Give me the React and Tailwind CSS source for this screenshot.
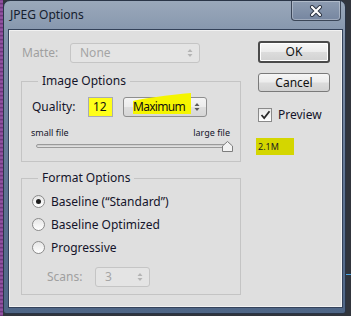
import React from 'react';

const font = { fontFamily: '"Noto Sans", "Open Sans", sans-serif' };

function Arrows({ disabled }) {
  const c = disabled ? '#b4b4b4' : '#5c5c5c';
  return (
    <svg width="6" height="10" viewBox="0 0 6 10" className="shrink-0">
      <path d="M0.5 4 L3 1 L5.5 4 Z" fill={c} />
      <path d="M0.5 6 L3 9 L5.5 6 Z" fill={c} />
    </svg>
  );
}

function Select({ value, disabled, className, textClass = '', children }) {
  return (
    <div
      className={
        'relative flex items-center justify-between rounded-[3px] border pl-[9px] pr-[6px] ' +
        (disabled
          ? 'border-[#c5c5c5] bg-[#e4e4e4] text-[#a5a5a5] '
          : 'border-[#8e8e8e] bg-[linear-gradient(to_bottom,#f4f4f4_0%,#ececec_48%,#dedede_52%,#d6d6d6_100%)] text-[#111] ') +
        className
      }
    >
      {children}
      <span className={'relative z-10 leading-none ' + textClass}>{value}</span>
      <Arrows disabled={disabled} />
    </div>
  );
}

function Radio({ checked, label }) {
  return (
    <div className="flex h-[23px] items-center">
      <div className="flex h-[13px] w-[13px] items-center justify-center rounded-full border border-[#8a8a8a] bg-[linear-gradient(to_bottom,#e6e6e6,#ffffff)]">
        {checked && <div className="h-[5px] w-[5px] rounded-full bg-[#1e1e1e]" />}
      </div>
      <span className="ml-[6px] text-[12px] text-[#14142a]">{label}</span>
    </div>
  );
}

function Group({ title, className, children }) {
  return (
    <fieldset className={'w-[220px] border border-[#c4c4c4] ' + className}>
      <legend className="ml-[16px] px-[4px] text-[12px] leading-[16px] text-[#14142a]">{title}</legend>
      {children}
    </fieldset>
  );
}

export default function App() {
  return (
    <div className="flex h-[316px] w-[351px] overflow-hidden bg-[#31353d]" style={font}>
      <div className="h-full w-[3px] bg-[repeating-linear-gradient(to_bottom,#7b3c8c_0px,#9a5aa8_2px,#5e2a6e_4px)]" />
      <div className="flex h-[314px] w-[343px] flex-col rounded-t-[7px] rounded-b-[3px] border border-[#2a3547] bg-[linear-gradient(to_bottom,#9aa8ba_0%,#8293ab_12%,#5f7493_60%,#4f6686_100%)]">
        <div className="flex h-[29px] items-start justify-between">
          <span className="pl-[6px] pt-[6px] text-[12px] leading-[16px] text-[#15202e]">JPEG Options</span>
          <div className="mr-[4px] flex h-[20px] w-[50px] items-center justify-center rounded-b-[4px] border border-t-0 border-[#3b4658] bg-[linear-gradient(to_bottom,#8d9cb1,#7686a0)] shadow-[inset_0_0_0_1px_rgba(255,255,255,0.3)]">
            <svg width="14" height="12" viewBox="0 0 14 12">
              <path d="M3 2 L11 10 M11 2 L3 10" stroke="#2c3442" strokeWidth="4" strokeLinecap="round" />
              <path d="M3 2 L11 10 M11 2 L3 10" stroke="#ffffff" strokeWidth="2.2" strokeLinecap="round" />
            </svg>
          </div>
        </div>
        <div className="ml-[5px] flex h-[277px] w-[333px] border border-[#f2f2f2] bg-[#dfdfdf] shadow-[0_0_0_1px_#34425a]">
          <div className="flex flex-col pl-[11px] pt-[12px]">
            <div className="flex h-[20px] items-center">
              <span className="ml-[1px] w-[48px] text-[12px] text-[#9f9f9f]">Matte:</span>
              <Select value="None" disabled className="h-[20px] w-[130px] text-[12px]" />
            </div>

            <Group title="Image Options" className="mt-[10px] pb-[8px]">
              <div className="mt-[8px] flex h-[20px] items-center pl-[10px]">
                <span className="w-[56px] text-[12px] text-[#14142a]">Quality:</span>
                <div className="flex h-[20px] w-[25px] items-center border border-[#a9abb2] bg-[#ffff1a] pl-[4px] text-[12px] text-[#111]">
                  12
                </div>
                <Select value="Maximum" textClass="tracking-[-0.7px]" className="ml-[10px] h-[20px] w-[84px] text-[12px]">
                  <svg width="70" height="26" viewBox="0 0 70 26" className="pointer-events-none absolute left-[8px] top-[-6px]">
                    <path d="M1 9 C 6 8, 14 6, 24 5 C 36 3, 48 2, 59 1 L 59 22 L 1 22 Z" fill="#f5f500" />
                  </svg>
                </Select>
              </div>
              <div className="mt-[10px] flex h-[12px] items-center justify-between pl-[9px] pr-[10px] text-[9px] leading-[12px] text-[#14142a]">
                <span>small file</span>
                <span>large file</span>
              </div>
              <div className="h-[14px] pl-[14px] pt-[5px]">
                <div className="relative h-[4px] w-[192px] rounded-[2px] border border-[#9a9a9a] bg-[linear-gradient(to_bottom,#c8c8c8,#e8e8e8)]">
                  <svg width="11" height="11" viewBox="0 0 11 11" className="absolute left-[185px] top-[-4px]">
                    <path d="M0.5 10.5 V5 L5.5 0.5 L10.5 5 V10.5 Z" fill="#f2f2f2" stroke="#7d7d7d" />
                  </svg>
                </div>
              </div>
            </Group>

            <Group title="Format Options" className="mt-[8px] pb-[7px]">
              <div className="mt-[4px] pl-[10px]">
                <Radio checked label="Baseline (“Standard”)" />
                <Radio label="Baseline Optimized" />
                <Radio label="Progressive" />
              </div>
              <div className="mt-[8px] flex h-[20px] items-center pl-[25px]">
                <span className="w-[48px] text-[12px] text-[#a0a0a0]">Scans:</span>
                <Select value="3" disabled className="h-[20px] w-[55px] text-[12px]" />
              </div>
            </Group>
          </div>

          <div className="ml-[17px] flex flex-col pt-[10px]">
            <button className="flex h-[22px] w-[72px] items-center justify-center rounded-[3px] border-2 border-[#4a4a4a] bg-[linear-gradient(to_bottom,#f6f6f6_0%,#ececec_48%,#dcdcdc_52%,#d2d2d2_100%)] text-[12px] text-[#111] shadow-[inset_0_0_0_1px_#ffffff]">
              OK
            </button>
            <button className="mt-[10px] flex h-[19px] w-[72px] items-center justify-center rounded-[3px] border border-[#7a7a7a] bg-[linear-gradient(to_bottom,#f6f6f6_0%,#ececec_48%,#dcdcdc_52%,#d2d2d2_100%)] text-[12px] text-[#111]">
              Cancel
            </button>
            <div className="mt-[16px] flex h-[14px] items-center">
              <div className="flex h-[14px] w-[14px] items-center justify-center border border-[#8a8a8a] bg-[linear-gradient(to_bottom,#e8e8e8,#ffffff)]">
                <svg width="11" height="10" viewBox="0 0 11 10">
                  <path d="M1.5 5 L4.2 8 L9.5 1.2" fill="none" stroke="#2a2a2a" strokeWidth="1.8" />
                </svg>
              </div>
              <span className="ml-[6px] text-[12px] text-[#14142a]">Preview</span>
            </div>
            <div className="ml-[-2px] mt-[16px] flex h-[17px] w-[38px] items-center bg-[#d4d600] pl-[2px] text-[9px] text-[#222]">
              2.1M
            </div>
          </div>
        </div>
      </div>
      <div className="flex h-full flex-1 flex-col">
        <div className="mt-[274px] h-[1px] w-full bg-[#4aa3e0]" />
      </div>
    </div>
  );
}
